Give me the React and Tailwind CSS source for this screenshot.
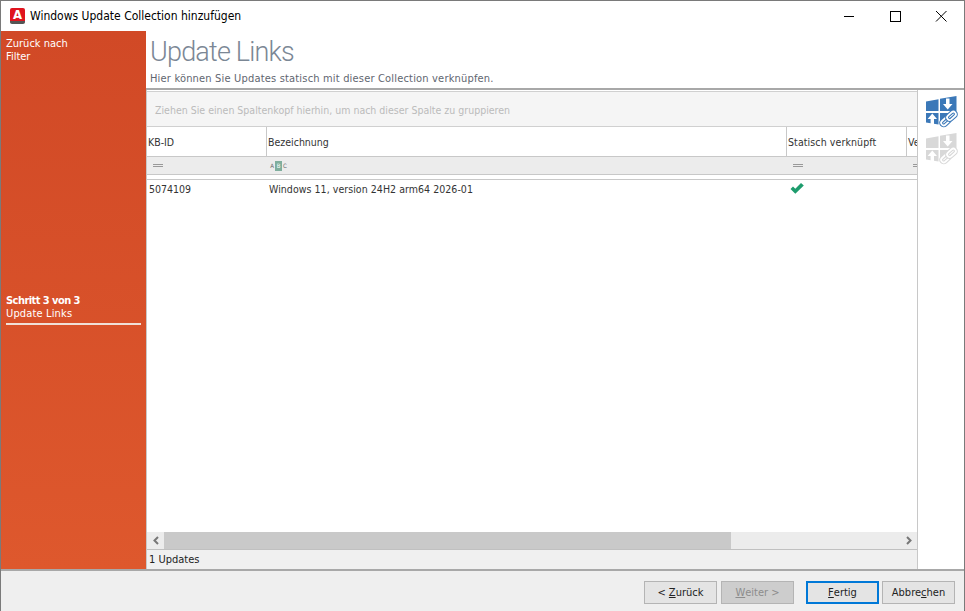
import React from 'react';

function LinkIcon({ color }) {
    return (
        <svg width="32" height="30" viewBox="0 0 32 30" className="block overflow-visible">
            <path d="M0 5.5 L12.5 3.2 V15 H0 Z" fill={color} />
            <path d="M14 2.8 L30.5 0 V15 H14 Z" fill={color} />
            <path d="M0 17 H12.5 V28.5 L0 26.5 Z" fill={color} />
            <path d="M14 17 H26 L14 29 Z" fill={color} />
            {/* arrows */}
            <path d="M20 2.5 H23.5 V8 H26.5 L21.7 13.5 L17 8 H20 Z" fill="#fff" />
            <path d="M6.3 17.5 L11 23 H8 V28 H4.6 V23 H1.6 Z" fill="#fff" />
            {/* chain */}
            <g transform="rotate(-42 22.5 22.5)" fill="none">
                <rect x="13.5" y="20" width="10" height="5" rx="2.5" fill="#fff" stroke={color} strokeWidth="4" />
                <rect x="13.5" y="20" width="10" height="5" rx="2.5" stroke="#fff" strokeWidth="1.8" />
                <rect x="21.5" y="20" width="10" height="5" rx="2.5" fill="#fff" stroke={color} strokeWidth="4" />
                <rect x="21.5" y="20" width="10" height="5" rx="2.5" stroke="#fff" strokeWidth="1.8" />
            </g>
        </svg>
    );
}

function WizardButton({ children, className = '' }) {
    return (
        <button className={`w-[73px] h-[23px] flex items-center justify-center pt-[1px] text-[11px] ${className}`}>
            {children}
        </button>
    );
}

function FilterEquals() {
    return <div className="w-[10px] h-[3px] border-y border-[#999]"></div>;
}

export default function App() {
    return (
        <div className="w-[965px] h-[611px] flex flex-col overflow-hidden bg-[#efefef] border-t border-x border-[#7a7a7a] font-['DejaVu_Sans_Condensed','Noto_Sans',sans-serif] text-[10.5px] text-[#333]">
            {/* Title bar */}
            <div className="h-[30px] shrink-0 bg-white flex items-center">
                <div className="ml-[9px] w-[15px] h-[16px] rounded-[2px] bg-[#e0141e] border-b-[3px] border-[#555] flex items-center justify-center text-white text-[13px] font-bold leading-none">A</div>
                <span className="ml-[5px] text-[12px] text-black">Windows Update Collection hinzufügen</span>
                <div className="ml-auto flex items-center">
                    <svg width="46" height="30" viewBox="0 0 46 30"><path d="M18 15.5 H28" stroke="#000" /></svg>
                    <svg width="46" height="30" viewBox="0 0 46 30"><rect x="18.5" y="10.5" width="10" height="10" fill="none" stroke="#000" /></svg>
                    <svg width="46" height="30" viewBox="0 0 46 30"><path d="M18 10 L28.5 20.5 M28.5 10 L18 20.5" stroke="#000" /></svg>
                </div>
            </div>

            {/* Body */}
            <div className="h-[538px] shrink-0 flex">
                {/* Sidebar */}
                <div className="w-[145px] shrink-0 bg-gradient-to-b from-[#d14926] to-[#de582d] px-[5px] text-[11px] text-white flex flex-col">
                    <div className="pt-[6px] leading-[13px]">
                        <div>Zurück nach</div>
                        <div>Filter</div>
                    </div>
                    <div className="mt-[231px] leading-[13px]">
                        <div className="font-bold tracking-[-0.55px]">Schritt 3 von 3</div>
                        <div className="tracking-[0.15px]">Update Links</div>
                        <div className="mt-[3px] h-[2px] w-[135px] bg-[#f0e0d8]"></div>
                    </div>
                </div>

                {/* Main */}
                <div className="flex-1 min-w-0 flex flex-col bg-white">
                    <div className="h-[59px] shrink-0 border-b-2 border-[#a8a8a8] pl-[4px]">
                        <div className="font-['Roboto',sans-serif] font-light text-[27px] tracking-[-0.8px] leading-[34px] pt-[4px] h-[40px] text-[#7b8795]">Update Links</div>
                        <div className="text-[11px] tracking-[0.18px] leading-[14px] text-[#5f6670] pt-[1px]">Hier können Sie Updates statisch mit dieser Collection verknüpfen.</div>
                    </div>
                    <div className="flex-1 min-h-0 flex">
                        {/* Grid */}
                        <div className="w-[771px] shrink-0 flex flex-col border-l border-[#c8c8c8] overflow-hidden">
                            <div className="h-[36px] shrink-0 mt-[1px] bg-[#f5f5f5] border-y border-[#d0d0d0] flex items-center pl-[8px] pt-[3px] text-[#bbb]">
                                Ziehen Sie einen Spaltenkopf hierhin, um nach dieser Spalte zu gruppieren
                            </div>
                            <div className="h-[30px] shrink-0 flex border-b border-[#c8c8c8] bg-white">
                                <div className="w-[120px] shrink-0 border-r border-[#c8c8c8] flex items-center pl-[1px] pt-[2px]">KB-ID</div>
                                <div className="w-[520px] shrink-0 border-r border-[#c8c8c8] flex items-center pl-[1px] pt-[2px]">Bezeichnung</div>
                                <div className="w-[120px] shrink-0 border-r border-[#c8c8c8] flex items-center pl-[1px] pt-[2px] tracking-[0.1px]">Statisch verknüpft</div>
                                <div className="w-[10px] shrink-0 overflow-hidden flex items-center pl-[1px] pt-[2px]">Ve</div>
                            </div>
                            <div className="h-[18px] shrink-0 flex items-center bg-[#ececec] border-b border-[#c8c8c8]">
                                <div className="w-[120px] shrink-0 pl-[6px]"><FilterEquals /></div>
                                <div className="w-[520px] shrink-0 pl-[3px] flex items-center text-[6px] leading-[7px] text-[#666]">
                                    <span className="w-[4px] text-center">A</span>
                                    <span className="w-[7px] h-[10px] mx-[1px] bg-[#7fae9d] text-white flex items-center justify-center">B</span>
                                    <span className="w-[4px] text-center">C</span>
                                </div>
                                <div className="w-[120px] shrink-0 pl-[6px]"><FilterEquals /></div>
                                <div className="flex-1 pl-[6px]"><FilterEquals /></div>
                            </div>
                            <div className="h-[5px] shrink-0 border-b border-[#c8c8c8]"></div>
                            <div className="h-[19px] shrink-0 flex items-center">
                                <div className="w-[120px] shrink-0 pl-[2px] pt-[1px]">5074109</div>
                                <div className="w-[520px] shrink-0 pl-[2px] pt-[1px] tracking-[0.05px]">Windows 11, version 24H2 arm64 2026-01</div>
                                <div className="pl-[3px] pb-[3px]">
                                    <svg width="14" height="11" viewBox="0 0 14 11"><path d="M0.5 6 L3 3.5 L5.3 5.8 L11 0 L13.8 2.5 L5.3 10.8 Z" fill="#1d9c6d" /></svg>
                                </div>
                            </div>
                            <div className="flex-1 min-h-0"></div>
                            {/* Scrollbar */}
                            <div className="h-[18px] shrink-0 flex bg-[#ececec] border-b border-[#c0c0c0]">
                                <div className="w-[17px] shrink-0 flex items-center justify-center">
                                    <svg width="8" height="9" viewBox="0 0 8 9"><path d="M6 1 L2.5 4.5 L6 8" fill="none" stroke="#777" strokeWidth="2" /></svg>
                                </div>
                                <div className="w-[567px] shrink-0 bg-[#c9c9c9]"></div>
                                <div className="flex-1 flex items-center justify-end pr-[4px]">
                                    <svg width="8" height="9" viewBox="0 0 8 9"><path d="M2 1 L5.5 4.5 L2 8" fill="none" stroke="#777" strokeWidth="2" /></svg>
                                </div>
                            </div>
                            <div className="flex-1 min-h-[19px] max-h-[19px] bg-[#f0f0f0] flex items-center pl-[2px] pt-[2px] text-[11px] text-[#222]">1 Updates</div>
                        </div>
                        {/* Side toolbar */}
                        <div className="flex-1 border-l border-[#c8c8c8] flex flex-col pl-[8px] pt-[6px] gap-[7px]">
                            <LinkIcon color="#3b78b8" />
                            <LinkIcon color="#d8d8d8" />
                        </div>
                    </div>
                </div>
            </div>

            {/* Footer */}
            <div className="flex-1 border-t-2 border-[#a8a8a8] bg-[#efefef] flex items-start pt-[10px] pl-[643px] text-[#222]">
                <WizardButton className="bg-[#e4e4e4] border border-[#b4b4b4]">&lt; <span className="underline ml-[3px]">Z</span>urück</WizardButton>
                <WizardButton className="ml-[4px] bg-[#cdcdcd] border border-[#b4b4b4] text-[#8c8c8c]"><span className="underline">W</span>eiter &gt;</WizardButton>
                <WizardButton className="ml-[12px] bg-[#e4e4e4] border-2 border-[#0078d7]"><span className="underline">F</span>ertig</WizardButton>
                <WizardButton className="ml-[3px] bg-[#e4e4e4] border border-[#b4b4b4]">Abbre<span className="underline">c</span>hen</WizardButton>
            </div>
        </div>
    );
}
